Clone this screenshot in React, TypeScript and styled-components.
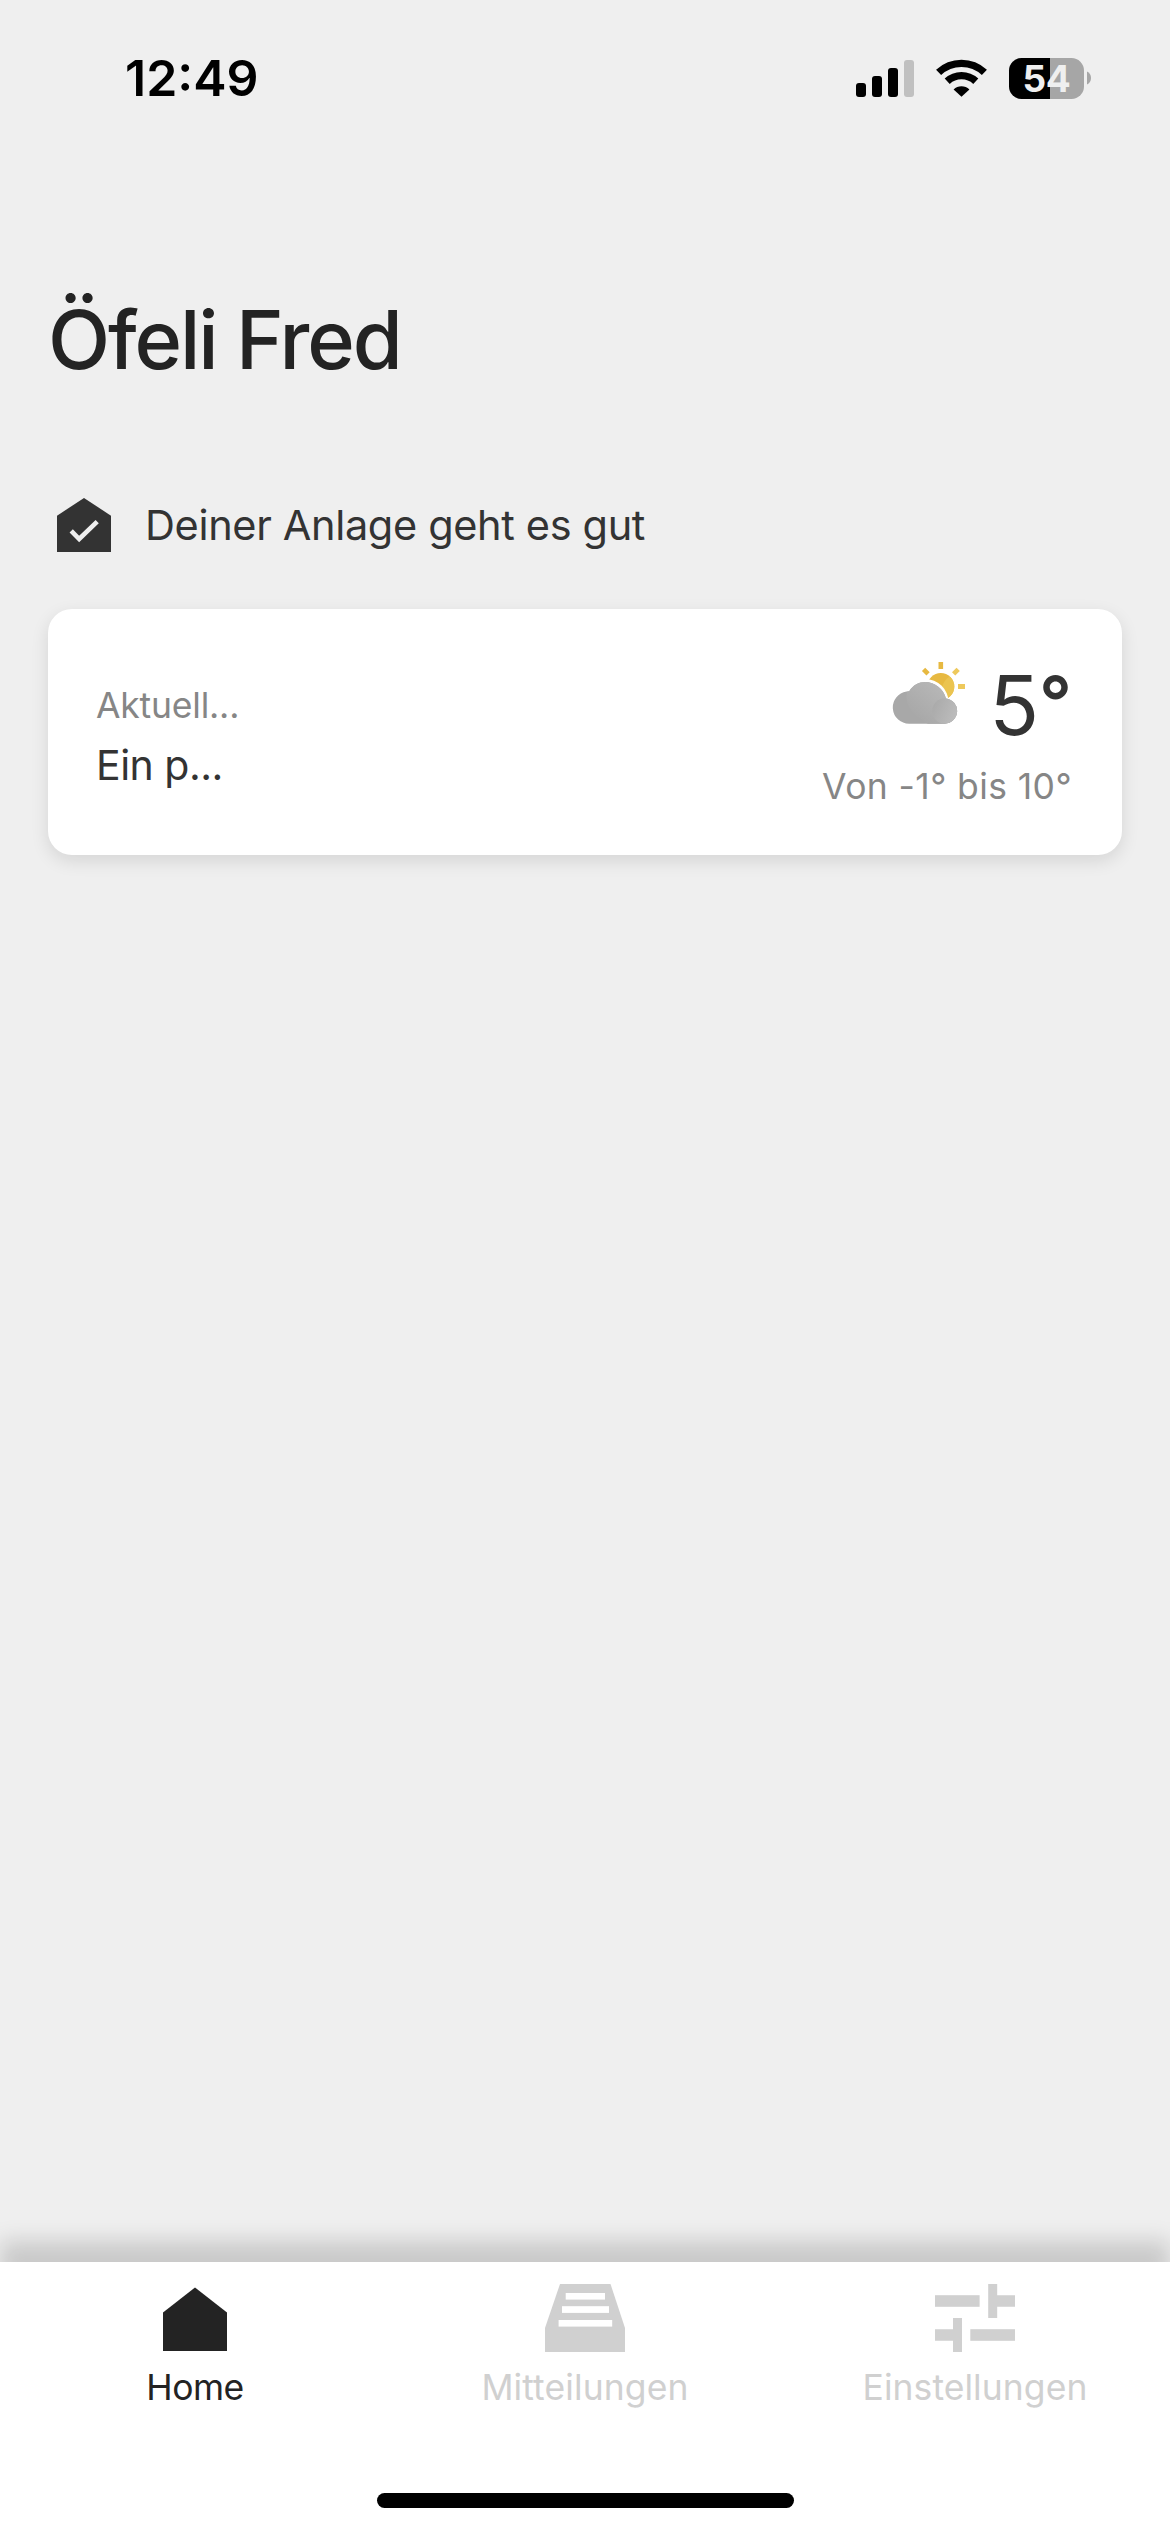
import React from "react";
import styled, { createGlobalStyle } from "styled-components";

const GlobalStyle = createGlobalStyle`
  * { box-sizing: border-box; }
  html, body { margin: 0; padding: 0; background: #efefef; }
  svg { display: block; flex: none; }
`;

const Screen = styled.div`
  width: 1170px;
  height: 2532px;
  display: flex;
  flex-direction: column;
  overflow: hidden;
  background: #efefef;
  color: #333333;
  font-family: Inter, "Liberation Sans", sans-serif;
`;

const StatusBar = styled.header`
  height: 156px;
  display: flex;
  align-items: center;
  justify-content: space-between;
  padding: 0 79px 0 125px;
`;

const Clock = styled.time`
  font-size: 50px;
  line-height: 60px;
  font-weight: 600;
  letter-spacing: 0;
  color: #000000;
`;

const StatusIcons = styled.div`
  display: flex;
  align-items: center;
`;

const Signal = styled.div`
  display: flex;
  align-items: flex-end;
  gap: 6px;
  height: 37px;
  margin-right: 22px;
`;

const SignalBar = styled.span<{ $height: number; $off?: boolean }>`
  width: 10px;
  height: ${(p) => p.$height}px;
  border-radius: 3px;
  background: ${(p) => (p.$off ? "#c0c0c0" : "#000000")};
`;

const Battery = styled.div`
  display: flex;
  align-items: center;
  gap: 3px;
  margin-left: 22px;
`;

const BatteryBody = styled.div`
  width: 75px;
  height: 41px;
  border-radius: 12.5px;
  display: flex;
  align-items: center;
  justify-content: center;
  background: linear-gradient(to right, #000000 41px, #a6a6a6 41px);
  color: #efefef;
  font-size: 37px;
  line-height: 41px;
  font-weight: 700;
  letter-spacing: -0.3px;
`;

const Content = styled.main`
  flex: 1;
  display: flex;
  flex-direction: column;
  padding: 134px 48px 0;
`;

const Title = styled.h1`
  margin: 0;
  font-size: 81px;
  line-height: 100px;
  font-weight: 500;
  letter-spacing: -2.1px;
  color: #232323;
`;

const Health = styled.div`
  display: flex;
  align-items: center;
  gap: 34px;
  height: 54px;
  margin-top: 108px;
  padding-left: 9px;
`;

const HealthText = styled.p`
  margin: 0;
  font-size: 41.5px;
  line-height: 54px;
  letter-spacing: -0.35px;
  white-space: nowrap;
`;

const Card = styled.section`
  display: flex;
  justify-content: space-between;
  height: 246px;
  margin-top: 57px;
  padding: 48px 50px 0 48px;
  border-radius: 24px;
  background: #ffffff;
  box-shadow: 0 6px 18px rgba(0, 0, 0, 0.11);
`;

const CardSide = styled.div<{ $end?: boolean }>`
  display: flex;
  flex-direction: column;
  align-items: ${(p) => (p.$end ? "flex-end" : "flex-start")};
  padding-top: ${(p) => (p.$end ? 0 : 26)}px;
`;

const Muted = styled.span<{ $spacing: number; $top?: number }>`
  margin-top: ${(p) => p.$top ?? 0}px;
  font-size: 35.5px;
  line-height: 46px;
  letter-spacing: ${(p) => p.$spacing}px;
  color: #868686;
  white-space: nowrap;
`;

const Forecast = styled.span`
  margin-top: 9px;
  font-size: 41px;
  line-height: 54px;
  letter-spacing: -0.5px;
  white-space: nowrap;
`;

const Current = styled.div`
  display: flex;
  align-items: flex-start;
  gap: 22px;
`;

const Temperature = styled.strong`
  display: flex;
  align-items: flex-start;
  font-size: 82px;
  line-height: 97px;
  font-weight: 400;
`;

const Degree = styled.span`
  font-size: 72px;
  line-height: 90px;
  font-weight: 600;
`;

const TabBar = styled.nav`
  height: 270px;
  display: flex;
  flex-direction: column;
  background: #ffffff;
  box-shadow: 0 -21px 21px rgba(0, 0, 0, 0.155);
`;

const Tabs = styled.div`
  display: grid;
  grid-template-columns: repeat(3, 1fr);
`;

const Tab = styled.button<{ $active?: boolean }>`
  display: flex;
  flex-direction: column;
  align-items: center;
  gap: 12px;
  padding: 22px 0 0;
  border: 0;
  background: none;
  font-family: inherit;
  color: ${(p) => (p.$active ? "#232323" : "#d0d0d0")};
`;

const TabLabel = styled.span<{ $spacing: number }>`
  font-size: 35.5px;
  line-height: 48px;
  letter-spacing: ${(p) => p.$spacing}px;
`;

const HomeIndicator = styled.div`
  width: 417px;
  height: 15px;
  margin: auto auto 24px;
  border-radius: 8px;
  background: #000000;
`;

const WifiIcon = () => (
  <svg width="51" height="38" viewBox="0 0 51 38">
    <g fill="none" stroke="#000" strokeWidth="7.4">
      <path d="M2.6 13.4 A33.5 33.5 0 0 1 48.4 13.4" />
      <path d="M11.2 22.2 A21 21 0 0 1 39.8 22.2" />
    </g>
    <path d="M17.6 30.4 a11.5 11.5 0 0 1 15.8 0 L25.5 37.8 Z" fill="#000" />
  </svg>
);

const BatteryTip = () => (
  <svg width="4" height="14" viewBox="0 0 4 14">
    <path d="M0 0.5 C2.4 1.5 4 4 4 7 S2.4 12.5 0 13.5 Z" fill="#a6a6a6" />
  </svg>
);

const HealthyHouseIcon = () => (
  <svg width="54" height="54" viewBox="0 0 54 54">
    <path d="M27 0 L54 17.7 V54 H0 V17.7 Z" fill="#333333" />
    <path d="M14.2 32.8 L22.2 41 L40.2 23.6" fill="none" stroke="#efefef" strokeWidth="4.6" />
  </svg>
);

const PartlyCloudyIcon = () => (
  <svg width="78" height="78" viewBox="888 657 78 78">
    <defs>
      <linearGradient id="puff" x1="0.2" y1="0.85" x2="0.85" y2="0.2">
        <stop offset="0" stopColor="#a8a8a8" />
        <stop offset="1" stopColor="#b9b9b9" />
      </linearGradient>
      <linearGradient id="puffSmall" x1="0" y1="0.3" x2="1" y2="0.7">
        <stop offset="0" stopColor="#aaaaaa" />
        <stop offset="1" stopColor="#bdbdbd" />
      </linearGradient>
      <clipPath id="sunDisc">
        <circle cx="939.8" cy="686.5" r="13.5" />
      </clipPath>
      <clipPath id="cloudShape">
        <path d="M908.2 691.3 C912 685 918 682 924 682 C934 682 942.5 689 945 698.4 A12.7 12.7 0 0 1 943.8 723.7 H908.3 A16.2 16.2 0 0 1 905.5 691.5 Z" />
      </clipPath>
    </defs>
    <g clipPath="url(#sunDisc)">
      <rect x="920" y="670" width="40" height="35" fill="#e7b941" />
      <circle cx="957" cy="690" r="16" fill="#ebc450" />
    </g>
    <rect x="937.5" y="662" width="4.6" height="7" fill="#e7b941" />
    <rect x="957" y="684" width="7" height="5" fill="#eec95c" />
    <rect x="922.5" y="668.4" width="4.6" height="6.4" fill="#e7b941" transform="rotate(-45 924.8 671.6)" />
    <rect x="952.6" y="668.4" width="4.6" height="6.4" fill="#eec95c" transform="rotate(45 954.9 671.6)" />
    <circle cx="924" cy="702.5" r="23.6" fill="#ffffff" />
    <g clipPath="url(#cloudShape)">
      <rect x="890" y="680" width="70" height="46" fill="#a8a8a8" />
      <path d="M905.5 697 C905.5 686 914 680 926 680 L960 680 L960 726 L930 726 C914 716 905.5 708 905.5 697 Z" fill="url(#puff)" />
      <circle cx="944" cy="711" r="12.8" fill="url(#puffSmall)" />
    </g>
  </svg>
);

const HomeIcon = () => (
  <svg width="80" height="68" viewBox="0 0 80 68">
    <path d="M40 3.4 L72 28.6 V67 H8 V28.6 Z" fill="currentColor" />
  </svg>
);

const InboxIcon = () => (
  <svg width="80" height="68" viewBox="0 0 80 68">
    <path d="M15 0 H65.5 L80 44 V68 H0 V44 Z" fill="currentColor" />
    <g fill="#ffffff">
      <rect x="20.7" y="9" width="39.3" height="6.6" />
      <rect x="17" y="22.2" width="47" height="6.7" />
      <rect x="13.6" y="36" width="53.6" height="6.6" />
    </g>
  </svg>
);

const SlidersIcon = () => (
  <svg width="80" height="68" viewBox="0 0 80 68">
    <g fill="currentColor">
      <rect x="0" y="11.2" width="44.6" height="11.6" />
      <path d="M53.2 0 H62.2 V11.2 H80 V22.8 H62.2 V34 H53.2 Z" />
      <path d="M18 34 H27 V68 H18 V56.8 H0 V45.2 H18 Z" />
      <rect x="35.3" y="45.2" width="44.7" height="11.6" />
    </g>
  </svg>
);

const tabs = [
  { label: "Home", spacing: -0.5, Icon: HomeIcon, active: true },
  { label: "Mitteilungen", spacing: 0.1, Icon: InboxIcon, active: false },
  { label: "Einstellungen", spacing: 0.05, Icon: SlidersIcon, active: false },
];

export default function App() {
  return (
    <>
      <GlobalStyle />
      <Screen>
        <StatusBar>
          <Clock>12:49</Clock>
          <StatusIcons>
            <Signal>
              <SignalBar $height={14} />
              <SignalBar $height={21} />
              <SignalBar $height={29} />
              <SignalBar $height={37} $off />
            </Signal>
            <WifiIcon />
            <Battery>
              <BatteryBody>54</BatteryBody>
              <BatteryTip />
            </Battery>
          </StatusIcons>
        </StatusBar>
        <Content>
          <Title>Öfeli Fred</Title>
          <Health>
            <HealthyHouseIcon />
            <HealthText>Deiner Anlage geht es gut</HealthText>
          </Health>
          <Card>
            <CardSide>
              <Muted $spacing={-0.2}>Aktuell...</Muted>
              <Forecast>Ein p...</Forecast>
            </CardSide>
            <CardSide $end>
              <Current>
                <PartlyCloudyIcon />
                <Temperature>
                  5<Degree>°</Degree>
                </Temperature>
              </Current>
              <Muted $spacing={0.4} $top={10}>Von -1° bis 10°</Muted>
            </CardSide>
          </Card>
        </Content>
        <TabBar>
          <Tabs>
            {tabs.map(({ label, spacing, Icon, active }) => (
              <Tab key={label} $active={active}>
                <Icon />
                <TabLabel $spacing={spacing}>{label}</TabLabel>
              </Tab>
            ))}
          </Tabs>
          <HomeIndicator />
        </TabBar>
      </Screen>
    </>
  );
}
